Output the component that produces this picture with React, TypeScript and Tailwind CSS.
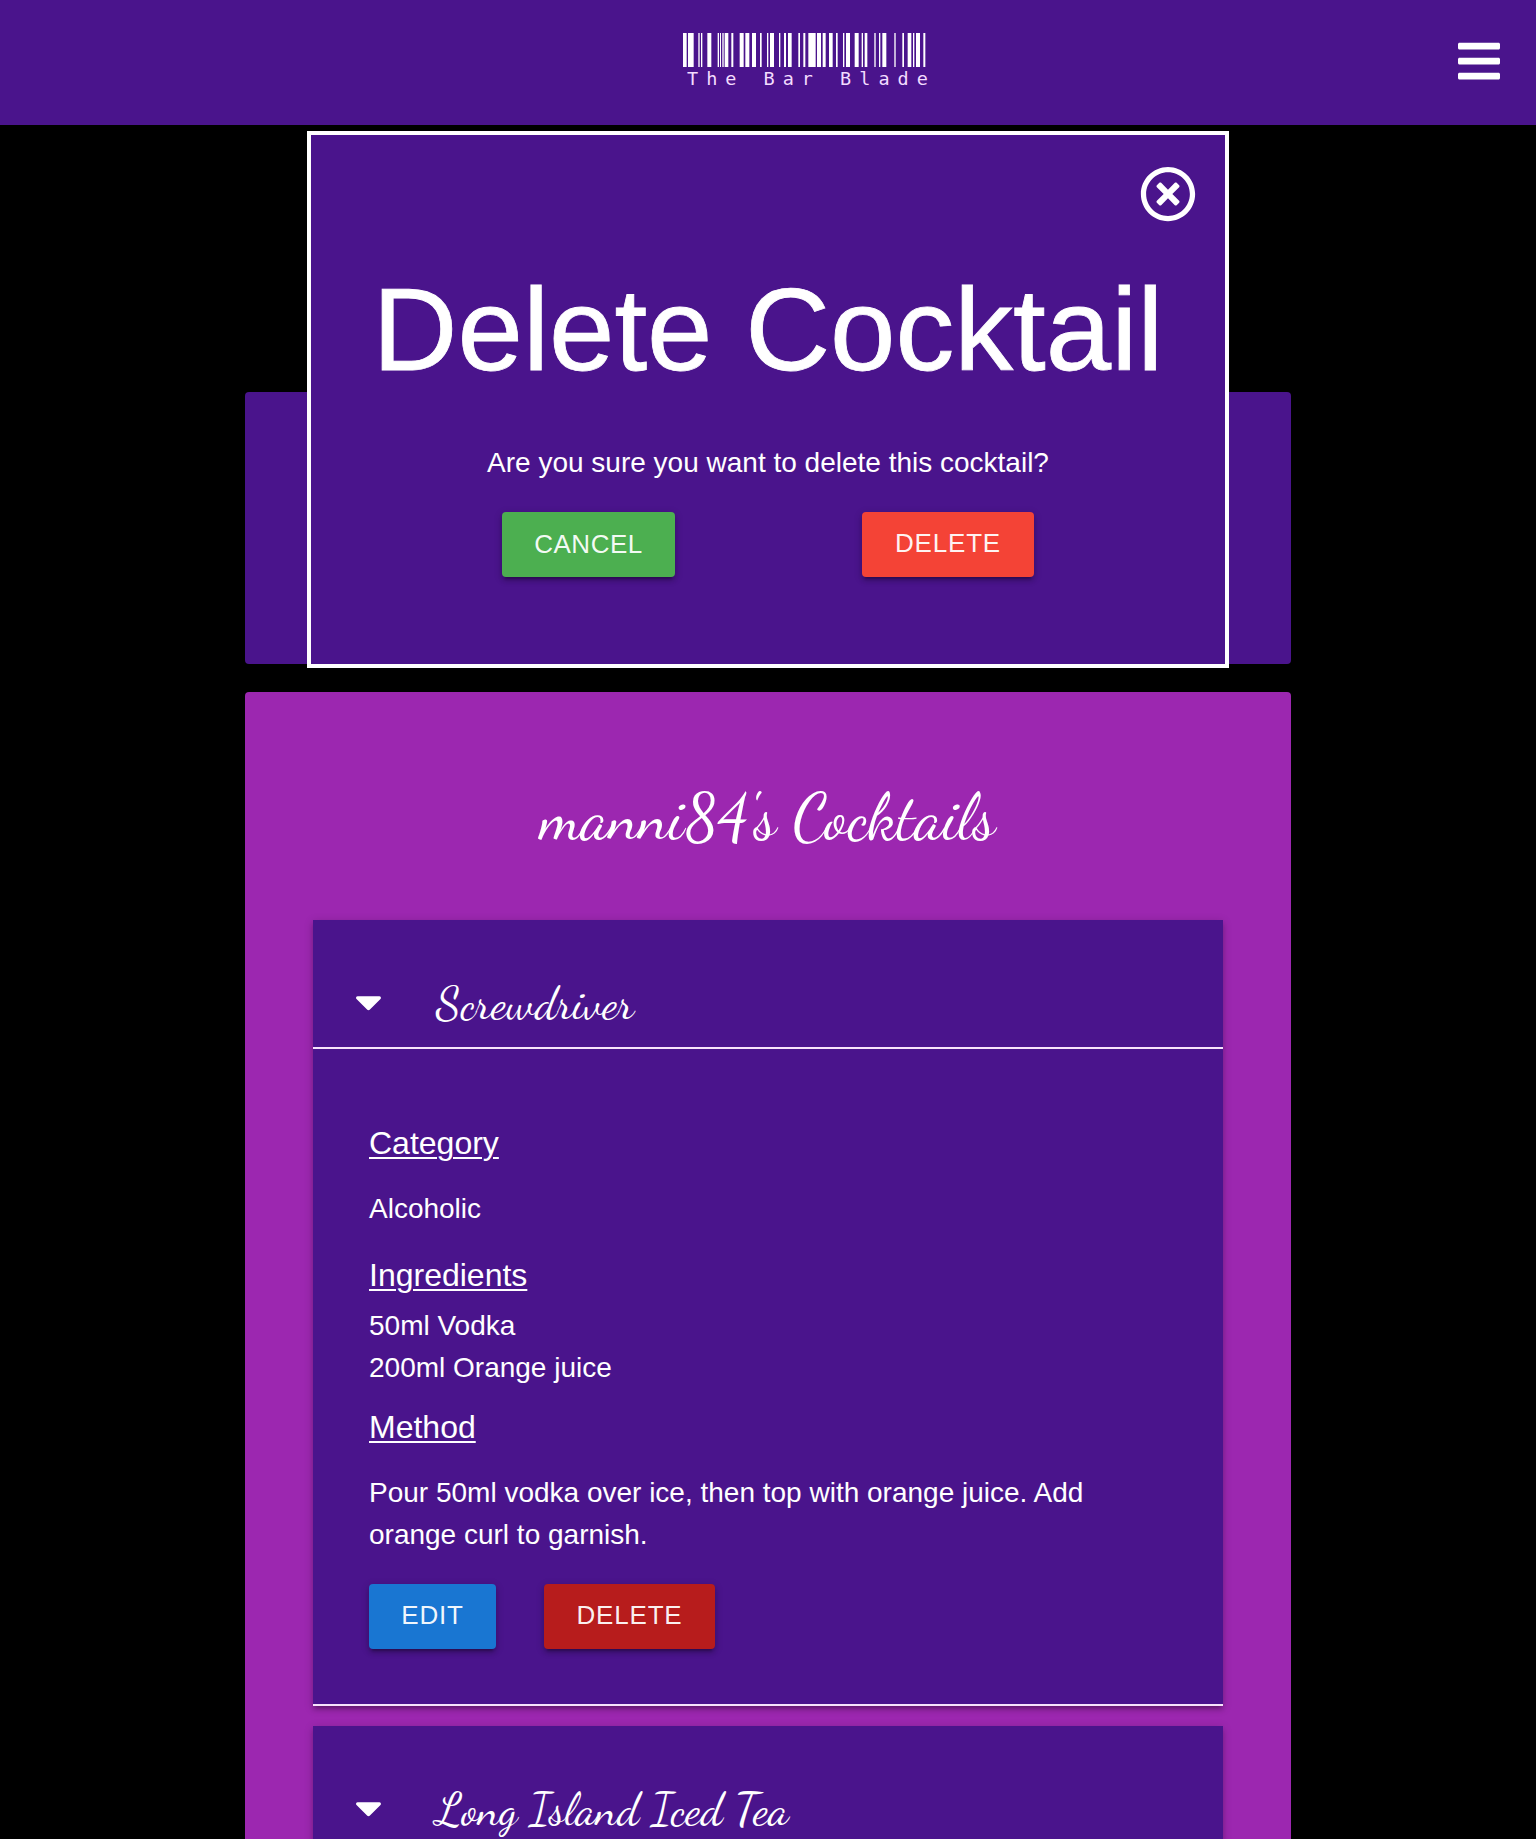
import type { ReactNode } from "react";
import { FaBars, FaCaretDown, FaRegTimesCircle } from "react-icons/fa";

// Start and width of every bar, in thirds of a pixel.
const bars: [number, number][] = [
  [0, 11], [15, 17], [46, 4], [54, 4], [73, 12], [104, 4], [111, 3], [118, 4], [125, 11],
  [145, 6], [170, 12], [187, 12], [207, 12], [231, 5], [252, 4], [261, 12], [288, 4],
  [303, 6], [315, 11], [346, 5], [361, 6], [376, 22], [402, 12], [419, 9], [438, 11],
  [459, 5], [480, 4], [489, 12], [515, 12], [536, 4], [545, 8], [574, 4], [588, 4],
  [598, 12], [634, 4], [658, 5], [674, 11], [690, 4], [699, 12], [721, 6],
];

function Logo() {
  return (
    <div className="flex w-[242px] flex-col">
      <svg width="243" height="34" viewBox="0 0 729 102" fill="#fff">
        {bars.map(([x, w]) => (
          <rect key={x} x={x} y="0" width={w} height="102" />
        ))}
      </svg>
      <span className="ml-[4px] mt-px whitespace-nowrap font-['DejaVu_Sans_Mono',monospace] text-[18.5px] leading-[21px] tracking-[8px] text-[#f3dcff]">
        The Bar Blade
      </span>
    </div>
  );
}

function Button({ className, children }: { className: string; children: ReactNode }) {
  return (
    <button
      className={`flex h-[65px] items-center justify-center rounded-[4px] pb-[4px] text-[26px] tracking-[0.8px] text-white/95 shadow-[0_4px_4px_0_rgba(0,0,0,0.14),0_5px_2px_-3px_rgba(0,0,0,0.2),0_2px_9px_0_rgba(0,0,0,0.2)] ${className}`}
    >
      {children}
    </button>
  );
}

function Header({ title }: { title: string }) {
  return (
    <div className="flex h-[129px] items-start border-b-2 border-[#f7e3fb] pl-[39px] pt-[56px]">
      <FaCaretDown size={52} className="mt-[4px] h-[43px] w-[33px] text-white" />
      <h2 className="ml-[51px] whitespace-nowrap font-['Dancing_Script','Liberation_Serif',cursive] text-[46px] leading-[56px]">
        {title}
      </h2>
    </div>
  );
}

const panelShadow =
  "shadow-[0_4px_4px_0_rgba(0,0,0,0.14),0_5px_2px_-3px_rgba(0,0,0,0.12),0_2px_9px_0_rgba(0,0,0,0.2)]";

export default function App() {
  return (
    <div className="relative h-[1839px] w-[1536px] overflow-hidden bg-black font-['Liberation_Sans',Arial,sans-serif] text-[28px] leading-[42px] text-white">
      <nav className="flex h-[125px] items-start justify-between bg-[#4a148c] pl-[683px] pr-[36px] pt-[33px]">
        <Logo />
        <FaBars size={48} className="mt-[4px] w-[42px]" />
      </nav>

      <main className="mx-auto mt-[267px] flex w-[1046px] flex-col gap-[28px]">
        <section className="h-[272px] rounded-[4px] bg-[#4a148c]" />
        <section className="h-[1200px] rounded-[4px] bg-[#9c27b0] px-[68px] pt-[82px]">
          <h1 className="text-center font-['Dancing_Script','Liberation_Serif',cursive] text-[63.9px] leading-[88px]">
            manni84's Cocktails
          </h1>

          <div className={`mt-[58px] h-[786px] bg-[#4a148c] ${panelShadow}`}>
            <Header title="Screwdriver" />
            <div className="h-[657px] border-b-2 border-[#f7e3fb] px-[56px] pt-[73px]">
              <h3 className="text-[32px] leading-[42px] underline decoration-2 underline-offset-[3px]">Category</h3>
              <p className="mt-[24px]">Alcoholic</p>
              <h3 className="mt-[24px] text-[32px] leading-[42px] underline decoration-2 underline-offset-[3px]">Ingredients</h3>
              <p className="mt-[9px]">50ml Vodka</p>
              <p>200ml Orange juice</p>
              <h3 className="mt-[17px] text-[32px] leading-[42px] underline decoration-2 underline-offset-[3px]">Method</h3>
              <p className="mt-[24px] w-[760px]">
                Pour 50ml vodka over ice, then top with orange juice. Add orange curl to garnish.
              </p>
              <div className="mt-[28px] flex gap-[48px]">
                <Button className="w-[127px] bg-[#1976d2]">EDIT</Button>
                <Button className="w-[171px] bg-[#b71c1c]">DELETE</Button>
              </div>
            </div>
          </div>

          <div className={`mt-[20px] h-[400px] bg-[#4a148c] ${panelShadow}`}>
            <Header title="Long Island Iced Tea" />
          </div>
        </section>
      </main>

      <div
        role="dialog"
        className="absolute left-[307px] top-[131px] flex h-[537px] w-[922px] flex-col items-center border-4 border-white bg-[#4a148c] pt-[31px]"
      >
        <FaRegTimesCircle size={56} className="mr-[29px] self-end" />
        <h1 className="mt-[30px] whitespace-nowrap text-[117.6px] leading-[156px] [-webkit-text-stroke:0.8px_white]">
          Delete Cocktail
        </h1>
        <p className="mt-[34px]">Are you sure you want to delete this cocktail?</p>
        <div className="mt-[28px] flex gap-[187px]">
          <Button className="w-[173px] bg-[#4caf50]">
            <span className="pt-[2px] tracking-[0.5px]">CANCEL</span>
          </Button>
          <Button className="w-[172px] bg-[#f44336]">DELETE</Button>
        </div>
      </div>
    </div>
  );
}
